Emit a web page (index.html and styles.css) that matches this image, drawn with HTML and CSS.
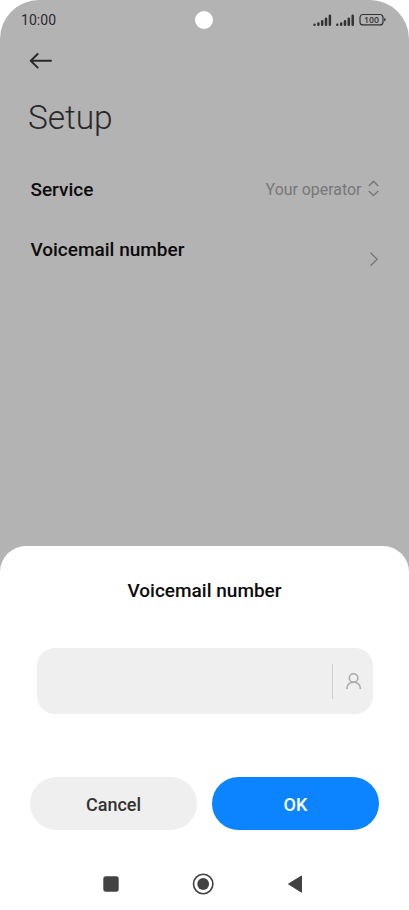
FILE: index.html
```
<!DOCTYPE html>
<html lang="en">
<head>
<meta charset="utf-8">
<title>Setup</title>
<link rel="stylesheet" href="styles.css">
</head>
<body>
<div class="phone">
  <header class="status">
    <span class="clock">10:00</span>
    <span class="camera"></span>
    <svg class="indicators" width="74" height="14" viewBox="0 0 74 14">
      <g id="signal" stroke="#333" stroke-width="2.500" stroke-linecap="round">
        <path d="M1.500 11.800v-.1M5.400 11.800v-1.300M9.200 11.800V8.200M13 11.800V5.800M16.900 11.800V2.700"/>
      </g>
      <use href="#signal" x="22.800"/>
      <rect x="47" y="1.500" width="23" height="10.400" rx="3" fill="none" stroke="#333" stroke-width="1.200"/>
      <path d="M71.100 5.100q1.600 0 1.600 1.600t-1.600 1.600z" fill="#333"/>
      <text class="battery-level" x="58.500" y="9.900" text-anchor="middle">100</text>
    </svg>
  </header>
  <nav class="toolbar">
    <svg width="24" height="18" viewBox="0 0 24 18" fill="none" stroke="#292929" stroke-width="1.9" stroke-linecap="round" stroke-linejoin="round"><path d="M22 8.800H2M8.700 2L1.700 8.800l7 6.800"/></svg>
  </nav>
  <h1 class="title">Setup</h1>
  <main class="settings">
    <div class="row">
      <span class="label">Service</span>
      <span class="value">Your operator</span>
      <svg class="sorter" width="12" height="18" viewBox="0 0 12 18" fill="none" stroke="#777" stroke-width="1.4"><path d="M1.800 5.900L6.500 1.200l4.700 4.700M1.800 10.900L6.500 15.600l4.700-4.700"/></svg>
    </div>
    <div class="row">
      <span class="label">Voicemail number</span>
      <svg class="chevron" width="10" height="16" viewBox="0 0 10 16" fill="none" stroke="#777" stroke-width="1.4"><path d="M1.500 1.800L8.200 8.300l-6.700 6.500"/></svg>
    </div>
  </main>
  <section class="sheet">
    <h2 class="sheet-title">Voicemail number</h2>
    <div class="field">
      <span class="divider"></span>
      <svg width="16" height="18" viewBox="0 0 16 18" fill="none" stroke="#a8a8a8" stroke-width="1.5"><circle cx="7.600" cy="6" r="4.300"/><path d="M.900 16.900v-.9C.900 12.700 3.900 10.300 7.600 10.300s6.700 2.400 6.700 5.700v.9"/></svg>
    </div>
    <div class="actions">
      <button class="button">Cancel</button>
      <button class="button primary">OK</button>
    </div>
    <footer class="navigation">
      <svg width="16" height="16" viewBox="0 0 16 16"><rect x=".3" y=".3" width="15.400" height="15.400" rx="2.600" fill="#424242"/></svg>
      <svg width="22" height="22" viewBox="0 0 22 22"><circle cx="11.200" cy="11" r="9.700" fill="none" stroke="#424242" stroke-width="1.600"/><circle cx="11.200" cy="11" r="5.900" fill="#424242"/></svg>
      <svg width="16" height="18" viewBox="0 0 16 18"><path d="M1.500 9L14.500 1v16.200z" fill="#424242" stroke="#424242" stroke-width="1" stroke-linejoin="round"/></svg>
    </footer>
  </section>
</div>
</body>
</html>
```
FILE: styles.css
```
* { box-sizing: border-box; }
body { margin: 0; background: #fff; font-family: Roboto, sans-serif; }
svg { display: block; flex: none; }
.phone {
  display: flex;
  flex-direction: column;
  width: 409px;
  height: 910px;
  overflow: hidden;
  background: #b3b3b3;
  border-radius: 39px 39px 0 0;
}
.status {
  display: grid;
  grid-template-columns: 1fr 18px 1fr;
  align-items: center;
  height: 40px;
  padding: 0 22px 0 21px;
}
.clock { font-size: 14px; font-weight: 450; color: #2b2b2b; letter-spacing: .05px; }
.camera { width: 18px; height: 18px; border-radius: 50%; background: #fff; }
.indicators { justify-self: end; }
.battery-level { font-family: "Open Sans", sans-serif; font-size: 8.7px; font-weight: 600; fill: #333; }
.toolbar { height: 42px; padding: 12px 29px; }
.title {
  height: 77px;
  margin: 0;
  padding-left: 28px;
  font-size: 33.5px;
  font-weight: 300;
  line-height: 71px;
  letter-spacing: -.1px;
  color: #292929;
}
.settings { padding: 0 30px; }
.row { display: flex; align-items: center; height: 60px; }
.label { flex: 1; padding-left: .4px; font-size: 19px; font-weight: 500; color: #0c0c0c; }
.value { font-size: 15.9px; color: #777; }
.sorter { margin-left: 5.6px; }
.chevron { margin-top: 20px; }
.sheet {
  height: 363.6px;
  margin-top: auto;
  background: #fff;
  border-radius: 26px 26px 0 0;
}
.sheet-title {
  height: 102px;
  margin: 0;
  padding-top: 33px;
  text-align: center;
  font-size: 19px;
  font-weight: 500;
  line-height: 23px;
  color: #0c0c0c;
}
.field {
  display: flex;
  align-items: center;
  justify-content: flex-end;
  gap: 13px;
  height: 65.6px;
  margin: 0 36.5px;
  padding-right: 11px;
  border-radius: 18px;
  background: #efefef;
}
.divider { width: 1px; height: 35px; background: #cecece; }
.actions { display: flex; gap: 15px; padding: 63px 30px 0; }
.button {
  flex: 1;
  height: 53px;
  padding: 1px 0 0;
  border: 0;
  border-radius: 27px;
  background: #efefef;
  color: #333;
  font: 500 18px Roboto, sans-serif;
}
.primary { background: #0d84ff; color: #fff; }
.navigation {
  display: flex;
  align-items: center;
  justify-content: space-between;
  height: 80px;
  margin-top: 14px;
  padding: 0 106px 0 103px;
}
```
